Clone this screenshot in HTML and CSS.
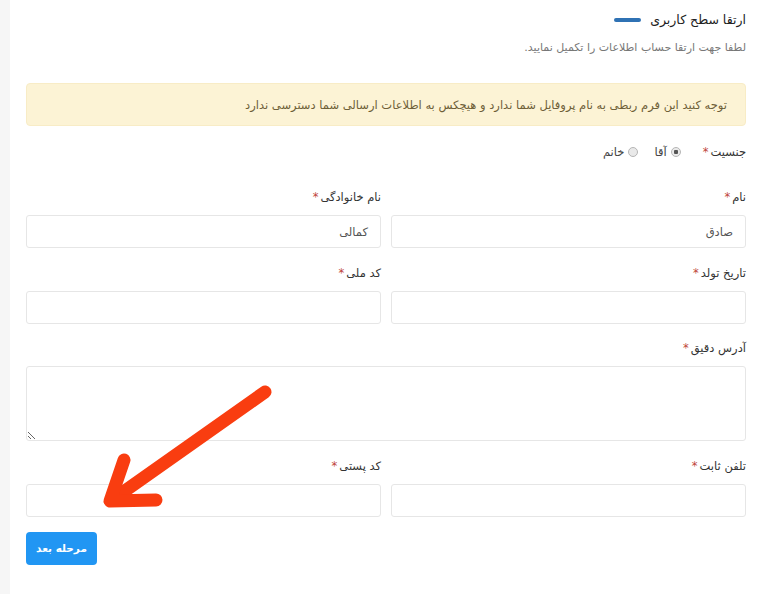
FILE: index.html
```html
<!DOCTYPE html>
<html lang="fa" dir="rtl">
<head>
<meta charset="utf-8">
<title>ارتقا سطح کاربری</title>
<link rel="stylesheet" href="styles.css">
</head>
<body>
<div class="page">
  <div class="head">
    <h1 class="title">ارتقا سطح کاربری</h1>
    <span class="title-bar"></span>
  </div>
  <p class="subtitle">لطفا جهت ارتقا حساب اطلاعات را تکمیل نمایید.</p>
  <div class="alert">توجه کنید این فرم ربطی به نام پروفایل شما ندارد و هیچکس به اطلاعات ارسالی شما دسترسی ندارد</div>

  <div class="gender">
    <span class="label">جنسیت<span class="req">*</span></span>
    <label class="radio"><span class="dot checked"></span>آقا</label>
    <label class="radio"><span class="dot"></span>خانم</label>
  </div>

  <div class="grid">
    <div class="field">
      <div class="label">نام<span class="req">*</span></div>
      <div class="input">صادق</div>
    </div>
    <div class="field">
      <div class="label">نام خانوادگی<span class="req">*</span></div>
      <div class="input">کمالی</div>
    </div>
    <div class="field">
      <div class="label">تاریخ تولد<span class="req">*</span></div>
      <div class="input"></div>
    </div>
    <div class="field">
      <div class="label">کد ملی<span class="req">*</span></div>
      <div class="input"></div>
    </div>
    <div class="field wide">
      <div class="label">آدرس دقیق<span class="req">*</span></div>
      <textarea class="textarea"></textarea>
    </div>
    <div class="field">
      <div class="label">تلفن ثابت<span class="req">*</span></div>
      <div class="input"></div>
    </div>
    <div class="field">
      <div class="label">کد پستی<span class="req">*</span></div>
      <div class="input"></div>
    </div>
  </div>

  <button class="btn" type="button">مرحله بعد</button>

  <svg class="arrow" width="758" height="594" viewBox="0 0 758 594" aria-hidden="true">
    <g fill="none" stroke="#f93d10" stroke-width="13" stroke-linecap="round" stroke-linejoin="round">
      <path d="M265 392 L112 500"/>
      <path d="M124 460 L110 501 L156 500"/>
    </g>
  </svg>
</div>
</body>
</html>
```

FILE: styles.css
```css
html, body {
  margin: 0;
  padding: 0;
  background: #ffffff;
}

body {
  font-family: "DejaVu Sans", "Noto Sans", sans-serif;
  color: #333;
  font-size: 12px;
}

.page {
  position: relative;
  box-sizing: border-box;
  width: 758px;
  height: 594px;
  padding: 10px 12px 0 16px;
  border-left: 10px solid #f6f6f6;
}

.head {
  display: flex;
  align-items: center;
  gap: 9px;
  height: 20px;
}

.title {
  margin: 0;
  font-size: 12.5px;
  font-weight: normal;
  color: #222;
  line-height: 20px;
}

.title-bar {
  display: block;
  width: 27px;
  height: 4px;
  border-radius: 2px;
  background: #2f72b4;
}

.subtitle {
  margin: 9px 0 0;
  line-height: 18px;
  font-size: 11px;
  color: #777;
}

.alert {
  margin-top: 26px;
  height: 43px;
  box-sizing: border-box;
  padding: 0 18px;
  display: flex;
  align-items: center;
  background: #fcf3d5;
  border: 1px solid #f8ecc6;
  border-radius: 4px;
  color: #6e5f38;
  font-size: 11.5px;
}

.gender {
  margin-top: 16px;
  display: flex;
  align-items: center;
  height: 20px;
  gap: 16px;
}

.gender .label {
  margin-left: 6px;
}

.radio {
  display: flex;
  align-items: center;
  gap: 4px;
  font-size: 11.5px;
  color: #444;
}

.dot {
  width: 10px;
  height: 10px;
  box-sizing: border-box;
  border-radius: 50%;
  border: 1px solid #b5b5b5;
  background: #e9e9e9;
  display: inline-block;
}

.dot.checked {
  background: radial-gradient(circle, #555 0 2px, #eaeaea 2.5px);
}

.label {
  font-size: 11.5px;
  line-height: 18px;
  color: #333;
}

.req {
  color: #c0453a;
  margin-right: 2px;
}

.grid {
  margin-top: 26px;
  display: grid;
  grid-template-columns: 1fr 1fr;
  column-gap: 10px;
  row-gap: 15.5px;
}

.field {
  display: flex;
  flex-direction: column;
  gap: 9px;
}

.field.wide {
  grid-column: 1 / -1;
}

.input {
  box-sizing: border-box;
  height: 33px;
  border: 1px solid #e6e6e6;
  border-radius: 3px;
  padding: 0 12px;
  display: flex;
  align-items: center;
  font-size: 11.5px;
  color: #555;
  background: #fff;
}

.textarea {
  display: block;
  box-sizing: border-box;
  width: 100%;
  height: 75px;
  margin: 0;
  border: 1px solid #e6e6e6;
  border-radius: 3px;
  font-family: inherit;
  background: #fff;
}

.btn {
  display: block;
  margin: 15px auto 0 0;
  width: 71px;
  height: 33px;
  border: 0;
  border-radius: 4px;
  background: #2196f3;
  color: #fff;
  font-family: inherit;
  font-weight: bold;
  font-size: 10.5px;
  padding: 0;
}

.arrow {
  position: absolute;
  left: -10px;
  top: 0;
  pointer-events: none;
}
```
